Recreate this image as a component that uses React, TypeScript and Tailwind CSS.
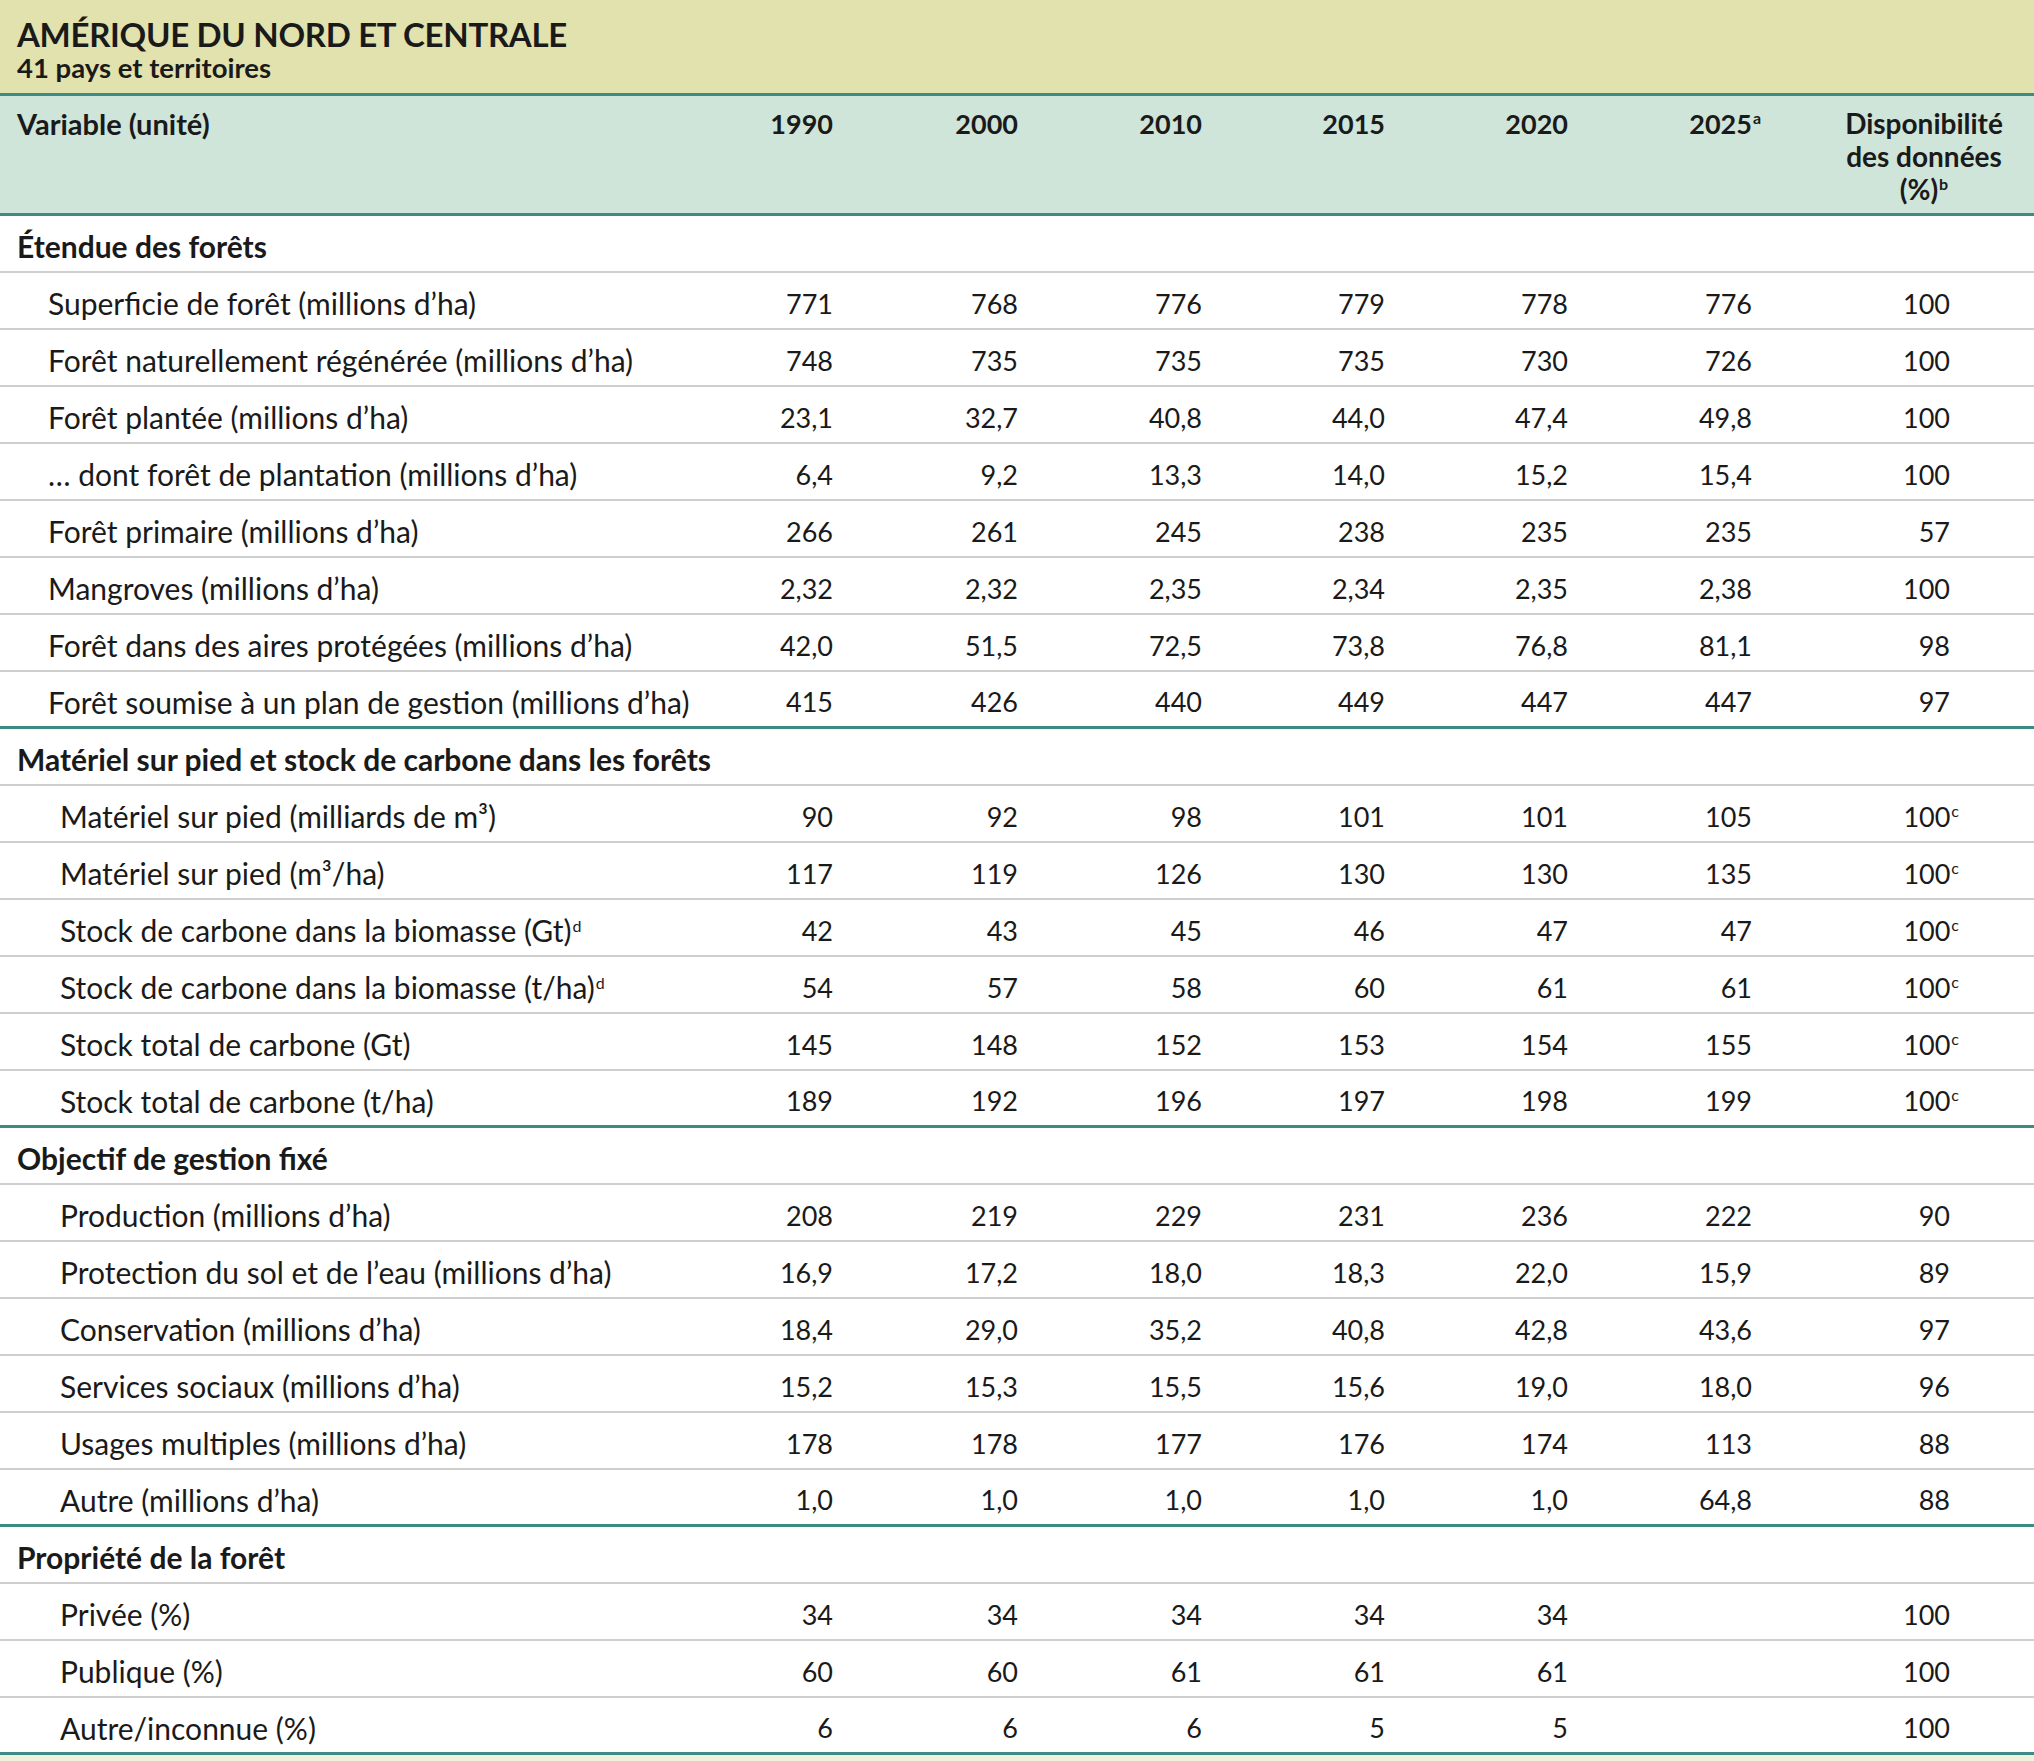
import React from "react";

type Row = {
  label: React.ReactNode;
  values: string[];
  dispo: string;
  sup?: string;
};

type Section = {
  title: string;
  indent: string;
  rows: Row[];
};

const Sup = ({ children }: { children: React.ReactNode }) => (
  <sup className="text-[16px] -top-[10px] ml-[1px]">{children}</sup>
);

const sections: Section[] = [
  {
    title: "Étendue des forêts",
    indent: "pl-[48px]",
    rows: [
      { label: "Superficie de forêt (millions d’ha)", values: ["771", "768", "776", "779", "778", "776"], dispo: "100" },
      { label: "Forêt naturellement régénérée (millions d’ha)", values: ["748", "735", "735", "735", "730", "726"], dispo: "100" },
      { label: "Forêt plantée (millions d’ha)", values: ["23,1", "32,7", "40,8", "44,0", "47,4", "49,8"], dispo: "100" },
      { label: "… dont forêt de plantation (millions d’ha)", values: ["6,4", "9,2", "13,3", "14,0", "15,2", "15,4"], dispo: "100" },
      { label: "Forêt primaire (millions d’ha)", values: ["266", "261", "245", "238", "235", "235"], dispo: "57" },
      { label: "Mangroves (millions d’ha)", values: ["2,32", "2,32", "2,35", "2,34", "2,35", "2,38"], dispo: "100" },
      { label: "Forêt dans des aires protégées (millions d’ha)", values: ["42,0", "51,5", "72,5", "73,8", "76,8", "81,1"], dispo: "98" },
      { label: "Forêt soumise à un plan de gestion (millions d’ha)", values: ["415", "426", "440", "449", "447", "447"], dispo: "97" },
    ],
  },
  {
    title: "Matériel sur pied et stock de carbone dans les forêts",
    indent: "pl-[60px]",
    rows: [
      { label: "Matériel sur pied (milliards de m³)", values: ["90", "92", "98", "101", "101", "105"], dispo: "100", sup: "c" },
      { label: "Matériel sur pied (m³/ha)", values: ["117", "119", "126", "130", "130", "135"], dispo: "100", sup: "c" },
      {
        label: (
          <>
            Stock de carbone dans la biomasse (Gt)<Sup>d</Sup>
          </>
        ),
        values: ["42", "43", "45", "46", "47", "47"],
        dispo: "100",
        sup: "c",
      },
      {
        label: (
          <>
            Stock de carbone dans la biomasse (t/ha)<Sup>d</Sup>
          </>
        ),
        values: ["54", "57", "58", "60", "61", "61"],
        dispo: "100",
        sup: "c",
      },
      { label: "Stock total de carbone (Gt)", values: ["145", "148", "152", "153", "154", "155"], dispo: "100", sup: "c" },
      { label: "Stock total de carbone (t/ha)", values: ["189", "192", "196", "197", "198", "199"], dispo: "100", sup: "c" },
    ],
  },
  {
    title: "Objectif de gestion fixé",
    indent: "pl-[60px]",
    rows: [
      { label: "Production (millions d’ha)", values: ["208", "219", "229", "231", "236", "222"], dispo: "90" },
      { label: "Protection du sol et de l’eau (millions d’ha)", values: ["16,9", "17,2", "18,0", "18,3", "22,0", "15,9"], dispo: "89" },
      { label: "Conservation (millions d’ha)", values: ["18,4", "29,0", "35,2", "40,8", "42,8", "43,6"], dispo: "97" },
      { label: "Services sociaux (millions d’ha)", values: ["15,2", "15,3", "15,5", "15,6", "19,0", "18,0"], dispo: "96" },
      { label: "Usages multiples (millions d’ha)", values: ["178", "178", "177", "176", "174", "113"], dispo: "88" },
      { label: "Autre (millions d’ha)", values: ["1,0", "1,0", "1,0", "1,0", "1,0", "64,8"], dispo: "88" },
    ],
  },
  {
    title: "Propriété de la forêt",
    indent: "pl-[60px]",
    rows: [
      { label: "Privée (%)", values: ["34", "34", "34", "34", "34", ""], dispo: "100" },
      { label: "Publique (%)", values: ["60", "60", "61", "61", "61", ""], dispo: "100" },
      { label: "Autre/inconnue (%)", values: ["6", "6", "6", "5", "5", ""], dispo: "100" },
    ],
  },
];

const years = ["1990", "2000", "2010", "2015", "2020"];
const grid = "grid grid-cols-[651px_182px_185px_184px_183px_183px_184px_282px]";

function DataRow({ row, indent, teal }: { row: Row; indent: string; teal: boolean }) {
  return (
    <div
      className={`${grid} h-[57px] items-center pt-[5px] text-[27px] ${
        teal ? "border-b-[3px] border-[#3e8b86]" : "border-b-2 border-[#cfcfcf]"
      }`}
    >
      <div className={`${indent} whitespace-nowrap text-[30px]`}>{row.label}</div>
      {row.values.map((v, i) => (
        <div key={i} className="text-right">
          {v}
        </div>
      ))}
      <div className="pr-[84px] text-right">
        {row.dispo}
        {row.sup && <sup className="text-[16px] -top-[10px] -mr-[9px] ml-[1px]">{row.sup}</sup>}
      </div>
    </div>
  );
}

export default function App() {
  return (
    <div
      className="w-[2034px] h-[1761px] bg-white text-[#1a1a1a] text-[27px] leading-none overflow-hidden"
      style={{ fontFamily: "Lato, 'Noto Sans', sans-serif" }}
    >
      <div className="h-[96px] bg-[#e2e2ae] border-b-[3px] border-[#3e8b86] pl-[17px] pt-[16px]">
        <div className="text-[33px] font-bold leading-[36px] tracking-[-0.3px]">AMÉRIQUE DU NORD ET CENTRALE</div>
        <div className="text-[27.5px] font-bold leading-[30px] mt-[1px]">41 pays et territoires</div>
      </div>
      <div className={`${grid} h-[120px] bg-[#cfe5da] border-b-[3px] border-[#3e8b86] font-bold pt-[14px] items-start`}>
        <div className="pl-[17px] text-[29px] -mt-[1px]">Variable (unité)</div>
        {years.map((y) => (
          <div key={y} className="text-right">
            {y}
          </div>
        ))}
        <div className="text-right">
          2025
          <sup className="text-[16px] -top-[10px] -mr-[9px] ml-[1px]">a</sup>
        </div>
        <div className="pl-[62px] text-center leading-[33px] -mt-[3px] text-[28px]">
          Disponibilité
          <br />
          des données
          <br />
          (%)
          <Sup>b</Sup>
        </div>
      </div>
      {sections.map((s) => (
        <div key={s.title}>
          <div className="h-[57px] flex items-center pt-[5px] pl-[17px] font-bold text-[30px] border-b-2 border-[#cfcfcf]">
            {s.title}
          </div>
          {s.rows.map((r, ri) => (
            <DataRow key={ri} row={r} indent={s.indent} teal={ri === s.rows.length - 1} />
          ))}
        </div>
      ))}
      <div className="h-full bg-[#f0f0dc]" />
    </div>
  );
}
